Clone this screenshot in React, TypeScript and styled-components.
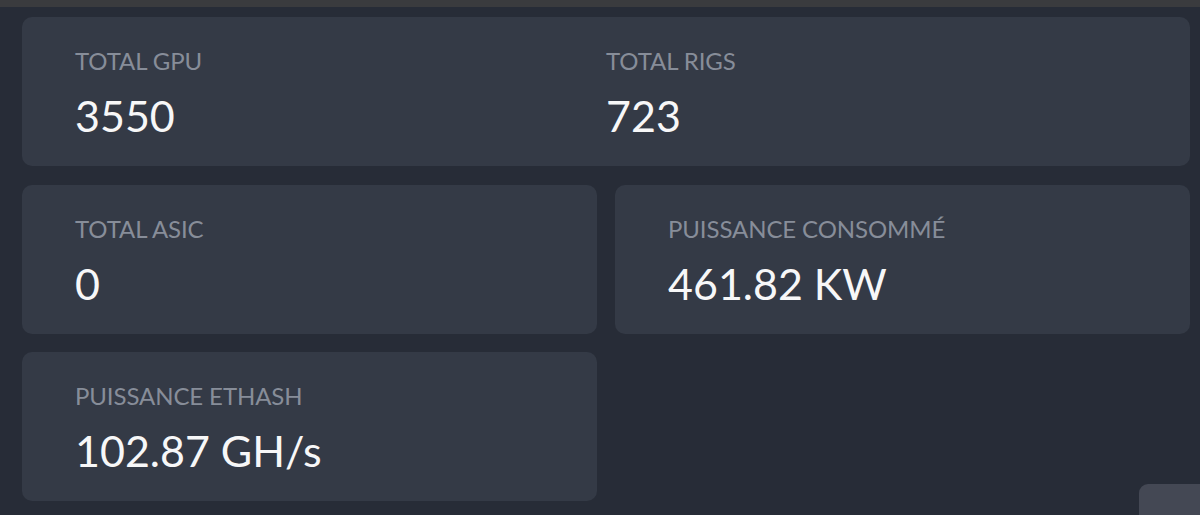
import styled, { createGlobalStyle } from 'styled-components';

const GlobalStyle = createGlobalStyle`
  html, body {
    margin: 0;
    padding: 0;
    background: #272c37;
    font-family: Lato, "Open Sans", sans-serif;
    overflow: hidden;
  }
`;

const TopBar = styled.div`
  height: 7px;
  background: #3a3b3e;
`;

const Page = styled.div`
  position: relative;
  height: 508px;
  overflow: hidden;
  padding: 10px 10px 0 22px;
  box-sizing: border-box;
`;

const Grid = styled.div`
  display: grid;
  grid-template-columns: 1fr 1fr;
  row-gap: 18.5px;
  column-gap: 18px;
`;

const Card = styled.div<{ $wide?: boolean }>`
  grid-column: ${(p) => (p.$wide ? '1 / span 2' : 'auto')};
  display: grid;
  grid-template-columns: ${(p) => (p.$wide ? '1fr 1fr' : '1fr')};
  height: 149px;
  box-sizing: border-box;
  padding: 0 53px;
  background: #343a46;
  border-radius: 10px;
`;

const Stat = styled.div`
  display: flex;
  flex-direction: column;
  padding-top: 30px;
`;

const Label = styled.div`
  color: #878d99;
  font-size: 24px;
  line-height: 28px;
  text-transform: uppercase;
  letter-spacing: -0.1px;
`;

const Value = styled.div`
  color: #f7f7f8;
  font-size: 43px;
  line-height: 50px;
  margin-top: 16px;
`;

const FloatButton = styled.div`
  position: absolute;
  left: 1139px;
  top: 477px;
  width: 90px;
  height: 60px;
  border-radius: 9px;
  background: #444854;
`;

type StatItem = { label: string; value: string };

const top: StatItem[] = [
  { label: 'Total GPU', value: '3550' },
  { label: 'Total Rigs', value: '723' },
];

const rest: StatItem[] = [
  { label: 'Total ASIC', value: '0' },
  { label: 'Puissance consommé', value: '461.82 KW' },
  { label: 'Puissance Ethash', value: '102.87 GH/s' },
];

function StatBlock({ label, value }: StatItem) {
  return (
    <Stat>
      <Label>{label}</Label>
      <Value>{value}</Value>
    </Stat>
  );
}

export default function App() {
  return (
    <>
      <GlobalStyle />
      <TopBar />
      <Page>
        <Grid>
          <Card $wide>
            {top.map((s) => (
              <StatBlock key={s.label} {...s} />
            ))}
          </Card>
          {rest.map((s) => (
            <Card key={s.label}>
              <StatBlock {...s} />
            </Card>
          ))}
        </Grid>
        <FloatButton />
      </Page>
    </>
  );
}
